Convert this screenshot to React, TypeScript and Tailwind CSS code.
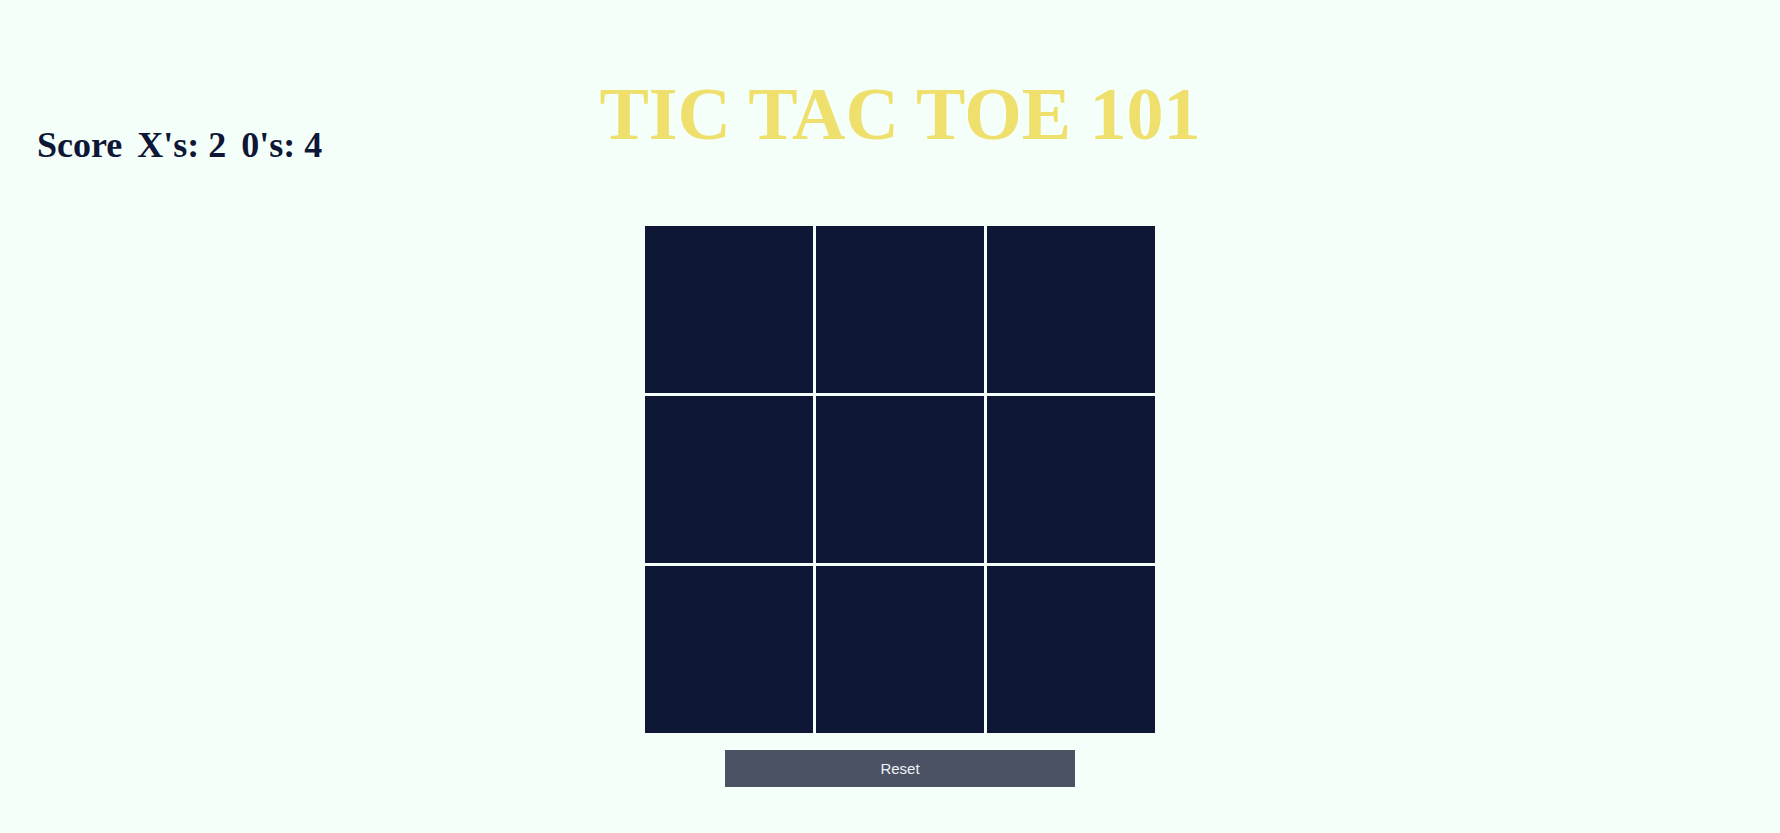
import React from "react";

export default function App() {
  const cells = Array.from({ length: 9 });
  const serif = { fontFamily: '"Liberation Serif", "Times New Roman", serif' };
  return (
    <div className="min-h-screen w-full bg-[#f5fffa]">
      <header className="grid pt-[77px]">
        <h1
          className="[grid-area:1/1] pl-[20px] text-center text-[74px] leading-none font-bold text-[#efe06d] whitespace-nowrap"
          style={serif}
        >
          TIC TAC TOE 101
        </h1>
        <div
          className="[grid-area:1/1] mt-[50px] flex gap-[15px] pl-[37px] text-[36px] leading-none font-bold text-[#0e1735]"
          style={serif}
        >
          <span>Score</span>
          <span>X's: 2</span>
          <span>0's: 4</span>
        </div>
      </header>
      <main className="flex flex-col items-center pl-[20px] mt-[63px]">
        <div className="grid w-[510px] grid-cols-3 gap-[3px]">
          {cells.map((_, i) => (
            <div key={i} className="h-[167px] bg-[#0e1735]" />
          ))}
        </div>
        <button
          className="mt-[17px] h-[37px] w-[350px] bg-[#4b5263] pt-[2px] text-[15px] text-[#eef2f7]"
          style={{ fontFamily: '"Liberation Sans", Arial, sans-serif' }}
        >
          Reset
        </button>
      </main>
    </div>
  );
}
